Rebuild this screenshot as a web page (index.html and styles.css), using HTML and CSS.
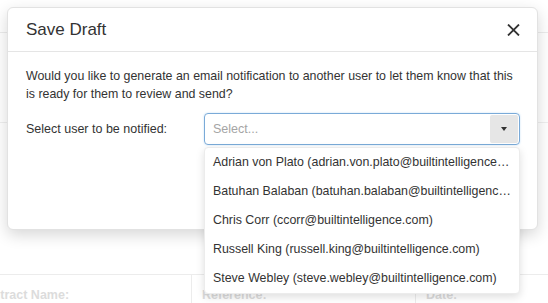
FILE: index.html
```
<!DOCTYPE html>
<html lang="en">

<head>
	<meta charset="UTF-8">
	<meta name="viewport" content="width=device-width, initial-scale=1.0">
	<title>Save Draft</title>
	<link rel="stylesheet" href="styles.css">
</head>

<body>

	<div class="page">
		<div class="page__top"></div>
		<div class="page__panel"></div>
		<table class="page__grid">
			<tr>
				<th class="col__name">Contract Name:</th>
				<th class="col__ref">Reference:</th>
				<th>Date:</th>
			</tr>
		</table>
	</div>

	<div class="modal">
		<div class="modal__header">
			<h4 class="modal__title">Save Draft</h4>
			<button class="modal__close" aria-label="Close">
				<svg width="13" height="12" viewBox="0 0 13 12">
					<path d="M1 0.5 L12 11.5 M12 0.5 L1 11.5" stroke="#333" stroke-width="1.8" fill="none" />
				</svg>
			</button>
		</div>
		<div class="modal__body">
			<p class="modal__text">Would you like to generate an email notification to another user to let them know that this is ready for them to review and send?</p>
			<div class="field">
				<label class="field__label">Select user to be notified:</label>
				<div class="select">
					<div class="select__control">
						<span class="select__placeholder">Select...</span>
						<span class="select__arrow"><i class="caret"></i></span>
					</div>
					<ul class="select__menu">
						<li>Adrian von Plato (adrian.von.plato@builtintelligence.com)</li>
						<li>Batuhan Balaban (batuhan.balaban@builtintelligence.com)</li>
						<li>Chris Corr (ccorr@builtintelligence.com)</li>
						<li>Russell King (russell.king@builtintelligence.com)</li>
						<li>Steve Webley (steve.webley@builtintelligence.com)</li>
					</ul>
				</div>
			</div>
		</div>
	</div>

</body>

</html>
```

FILE: styles.css
```
html,
body {
	margin: 0;
	background: #fff;
	font-family: "Liberation Sans", Arial, sans-serif;
	color: #333;
	overflow: hidden;
}

.page__top {
	height: 32px;
	border-bottom: 1px solid #ececec;
}

.page__panel {
	height: 89px;
	border-bottom: 1px solid #efefef;
}

.page__grid {
	margin-top: 151px;
	margin-left: -34px;
	border-collapse: collapse;
	border-top: 1px solid #ececec;
	width: 620px;
}

.page__grid th {
	text-align: left;
	font-size: 12.5px;
	font-weight: bold;
	color: #dcdcdc;
	padding: 13px 10px;
	border-left: 1px solid #ececec;
	white-space: nowrap;
}

.page__grid th:first-child {
	border-left: 0;
}

.col__name {
	width: 205px;
}

.col__ref {
	width: 203px;
}

/* modal */

.modal {
	position: absolute;
	left: 7px;
	top: 7px;
	width: 529px;
	background: #fff;
	border: 1px solid #e2e2e2;
	border-radius: 6px;
	box-shadow: 0 5px 15px rgba(0, 0, 0, .16);
}

.modal__header {
	display: flex;
	align-items: center;
	justify-content: space-between;
	height: 43px;
	padding: 0 17px 0 18px;
	border-bottom: 1px solid #e5e5e5;
}

.modal__title {
	margin: 0;
	font-size: 17px;
	font-weight: normal;
	color: #333;
}

.modal__close {
	border: 0;
	background: none;
	padding: 0;
	display: flex;
}

.modal__body {
	padding: 15px 17px 84px 18px;
}

.modal__text {
	margin: 0 0 10px;
	font-size: 12.4px;
	line-height: 18px;
}

.field {
	display: grid;
	grid-template-columns: 178px 1fr;
	align-items: center;
	font-size: 12.5px;
}

.select {
	position: relative;
}

.select__control {
	display: flex;
	align-items: center;
	justify-content: space-between;
	height: 30px;
	border: 1px solid #7aaad8;
	border-radius: 4px;
	padding: 0 1px 0 8px;
	box-shadow: 0 0 2px rgba(102, 175, 233, .4);
}

.select__placeholder {
	color: #a5a5a5;
}

.select__arrow {
	width: 28px;
	height: 28px;
	background: #e6e6e6;
	border-radius: 2px;
	display: flex;
	align-items: center;
	justify-content: center;
}

.caret {
	width: 0;
	height: 0;
	border-left: 3.5px solid transparent;
	border-right: 3.5px solid transparent;
	border-top: 4px solid #333;
}

.select__menu {
	position: absolute;
	top: 34px;
	left: 0;
	right: 0;
	margin: 0;
	padding: 0;
	list-style: none;
	background: #fff;
	border: 1px solid #ececec;
	border-radius: 4px;
	box-shadow: 0 3px 8px rgba(0, 0, 0, .13);
}

.select__menu li {
	height: 29px;
	line-height: 28px;
	padding: 0 7px 0 8px;
	font-size: 12.4px;
	white-space: nowrap;
	overflow: hidden;
	text-overflow: ellipsis;
}
```
